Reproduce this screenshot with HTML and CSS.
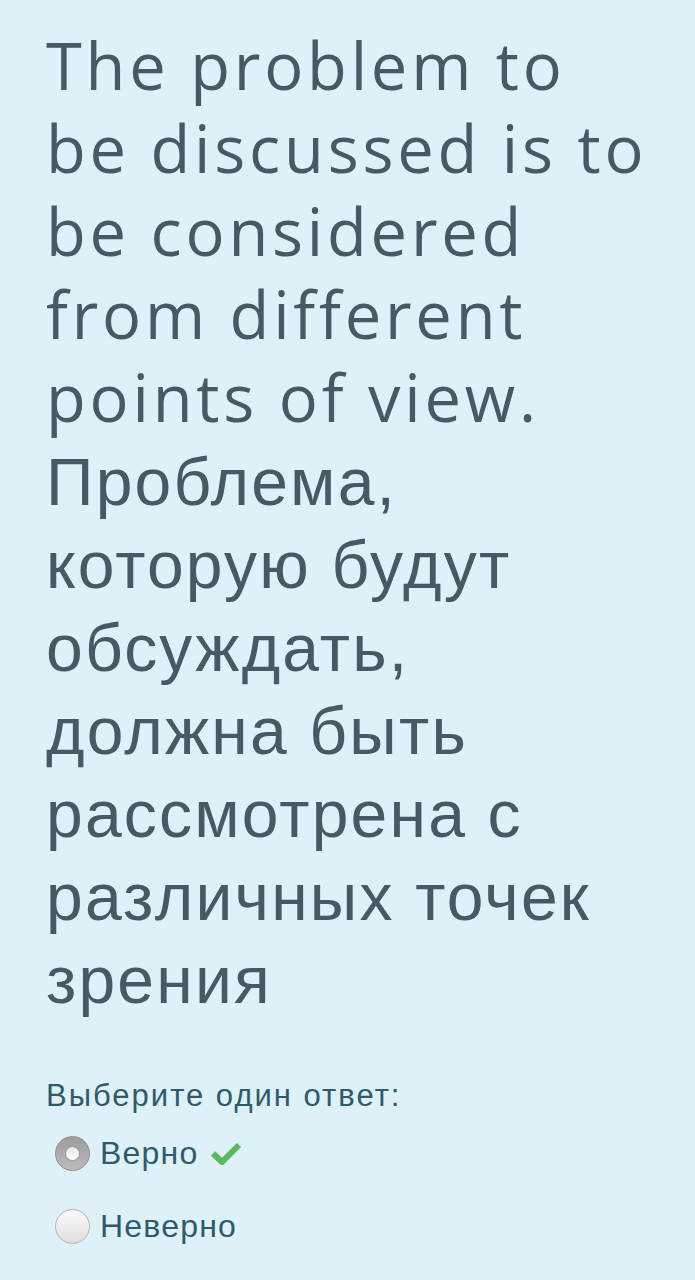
FILE: index.html
```html
<!DOCTYPE html>
<html lang="ru">
<head>
<meta charset="utf-8">
<title>Вопрос</title>
<link rel="stylesheet" href="styles.css">
</head>
<body>
<main class="question">
  <p class="qtext"><span class="lat">The problem to</span><br><span class="lat">be discussed is to</span><br><span class="lat">be considered</span><br><span class="lat">from different</span><br><span class="lat">points of view.</span><br><span class="cyr">Проблема,</span><br><span class="cyr">которую будут</span><br><span class="cyr">обсуждать,</span><br><span class="cyr">должна быть</span><br><span class="cyr">рассмотрена с</span><br><span class="cyr">различных точек</span><br><span class="cyr">зрения</span></p>
  <div class="prompt">Выберите один ответ:</div>
  <div class="answers">
    <div class="answer">
      <span class="radio radio-checked"><span class="dot"></span></span>
      <span class="label">Верно</span>
      <svg class="check" viewBox="0 0 32 24" width="32" height="24" aria-hidden="true"><path d="M3 12.5 L12 21 L29 4" fill="none" stroke="#5cb85c" stroke-width="6" stroke-linejoin="miter" stroke-linecap="butt"/></svg>
    </div>
    <div class="answer">
      <span class="radio"></span>
      <span class="label">Неверно</span>
    </div>
  </div>
</main>
</body>
</html>
```
FILE: styles.css
```css
html, body {
  margin: 0;
  padding: 0;
  background: #def0f8;
}
body {
  width: 695px;
  min-height: 1280px;
  font-family: "Liberation Sans", Arial, sans-serif;
}
.question {
  padding: 26px 0 0 46px;
}
.qtext {
  margin: 0;
  font-family: "Liberation Sans", Arial, sans-serif;
  font-size: 66px;
  line-height: 83px;
  color: #455a64;
}
.lat {
  font-family: "Open Sans", sans-serif;
  font-size: 65px;
  line-height: 1;
  letter-spacing: 3.8px;
}
.cyr {
  letter-spacing: 2.2px;
}
.prompt {
  margin-top: 54px;
  font-size: 31px;
  line-height: 40px;
  color: #2e5b6b;
  letter-spacing: 2px;
}
.answers {
  display: flex;
  flex-direction: column;
  gap: 33px;
  margin-top: 17px;
  padding-left: 9px;
}
.answer {
  display: flex;
  align-items: center;
  height: 40px;
  gap: 10px;
}
.label {
  font-size: 32px;
  color: #2e5b6b;
  letter-spacing: 1.2px;
}
.radio {
  box-sizing: border-box;
  width: 35px;
  height: 35px;
  border-radius: 50%;
  border: 1.5px solid #b3b3b3;
  background: linear-gradient(#fbfbfb, #dedede);
  display: flex;
  align-items: center;
  justify-content: center;
}
.radio-checked {
  border: 1.5px solid #8f8f8f;
  background: linear-gradient(#9c9c9c, #bcbcbc);
}
.dot {
  width: 13px;
  height: 13px;
  border-radius: 50%;
  background: linear-gradient(#e9e9e9, #ffffff);
  box-shadow: 0 0 0 1px rgba(120,120,120,0.3);
}
.check {
  margin-left: 2px;
}
```
